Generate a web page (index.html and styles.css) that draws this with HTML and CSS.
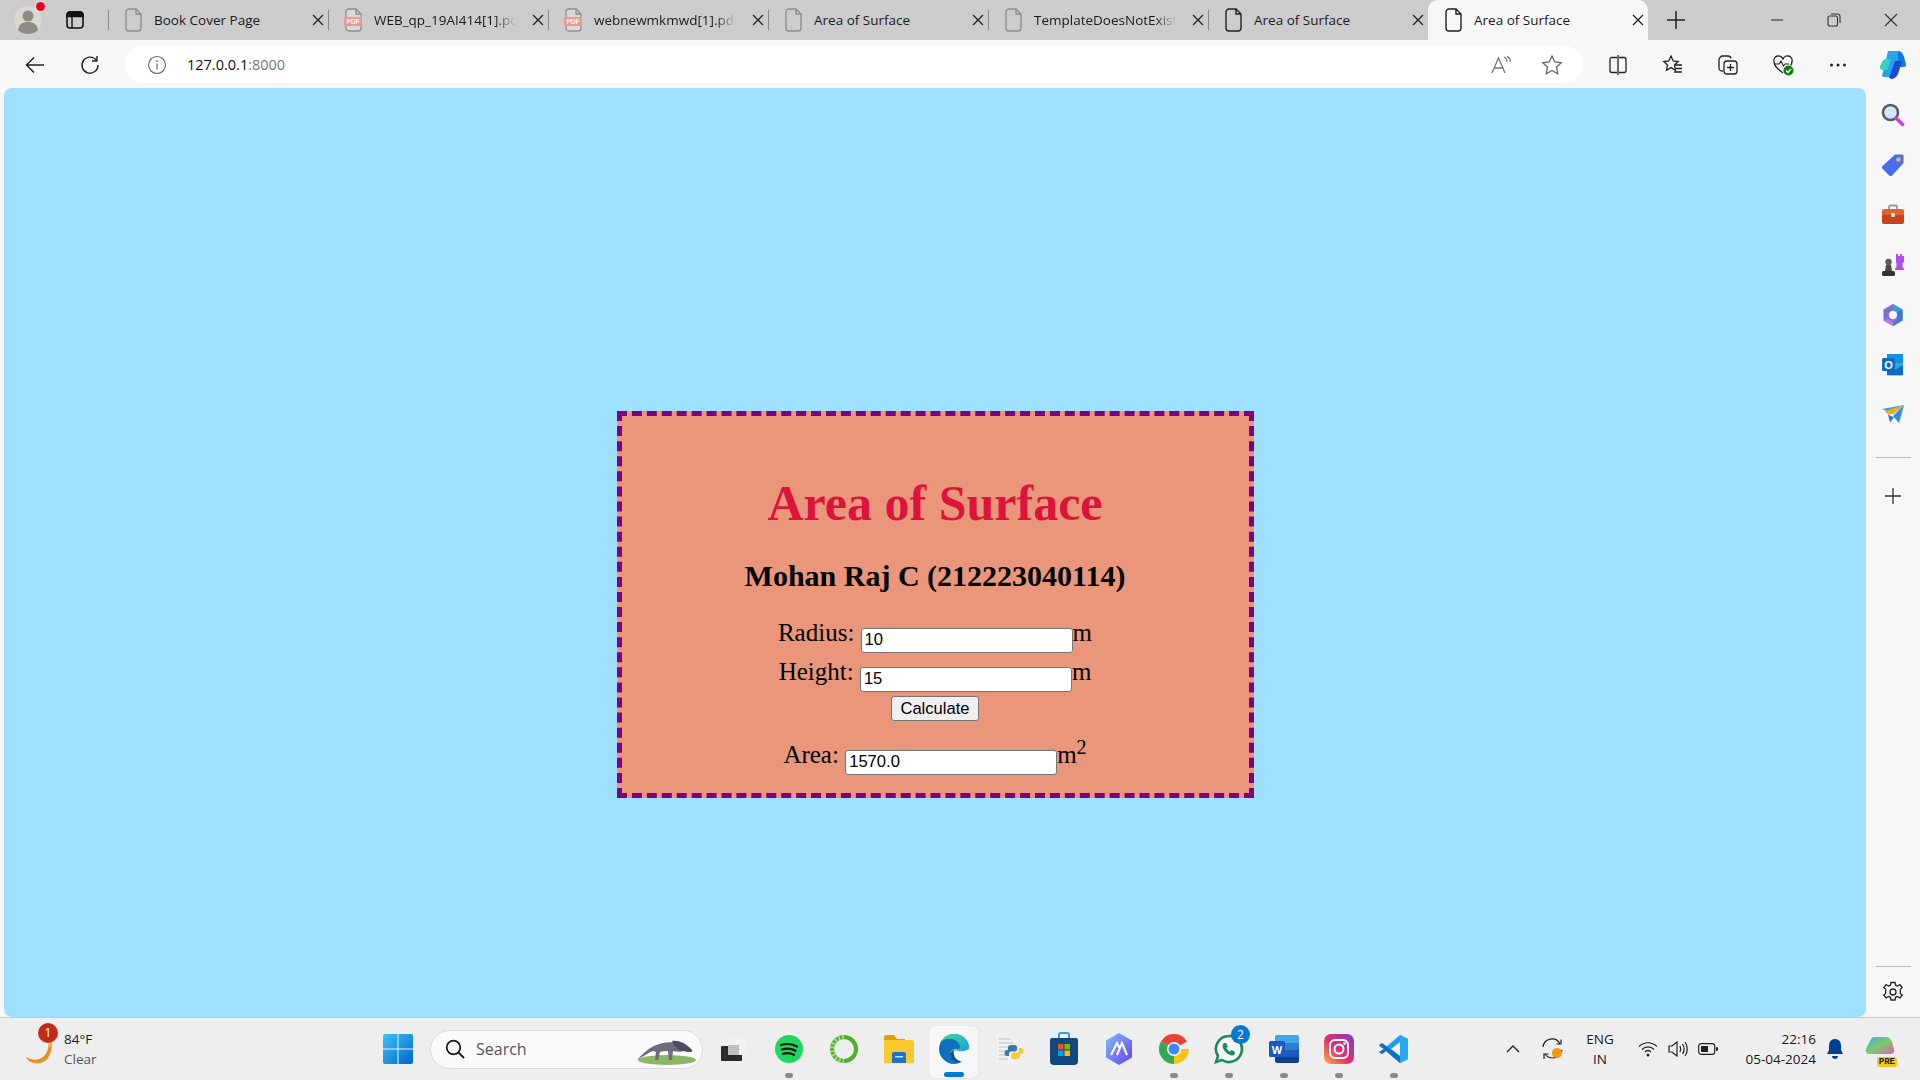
FILE: index.html
```html
<!DOCTYPE html>
<html lang="en">
<head>
  <meta charset="UTF-8" />
  <title>Area of Surface</title>
  <link rel="stylesheet" href="styles.css">
</head>
<body>
  <svg class="defs" width="0" height="0">
    <symbol id="file" viewBox="0 0 18 24"><path d="M2 4a3 3 0 0 1 3-3h7l5 5v14a3 3 0 0 1-3 3H5a3 3 0 0 1-3-3z M12 1v5h5" fill="none" stroke="currentColor" stroke-width="1.4"/></symbol>
    <symbol id="pdf" viewBox="0 0 18 24"><path d="M2 4a3 3 0 0 1 3-3h7l5 5v14a3 3 0 0 1-3 3H5a3 3 0 0 1-3-3z M12 1v5h5" fill="#fff" fill-opacity=".25" stroke="#8f8f8f" stroke-width="1.3"/><rect x="0" y="9" width="18" height="9" rx="1" fill="#e59a97"/><text x="9" y="16.2" text-anchor="middle" class="pdf-label">PDF</text></symbol>
    <symbol id="close" viewBox="0 0 12 12"><path d="M1 1l10 10M11 1L1 11" stroke="#222" stroke-width="1.3" fill="none"/></symbol>
  </svg>

  <div class="tabstrip">
    <div class="profile">
      <svg width="30" height="30" viewBox="0 0 30 30"><circle cx="15" cy="15" r="14" fill="#d9d7d2"/><circle cx="15" cy="11" r="5.5" fill="#8f8b85"/><path d="M5 25c1-6 5-8 10-8s9 2 10 8c-3 3-7 4-10 4s-7-1-10-4z" fill="#8f8b85"/></svg>
      <span class="profile-dot"></span>
    </div>
    <div class="tabs-btn">
      <svg width="18" height="18" viewBox="0 0 18 18"><rect x="1" y="1" width="16" height="16" rx="3" fill="none" stroke="#111" stroke-width="1.6"/><path d="M1 5.5V4a3 3 0 0 1 3-3h10a3 3 0 0 1 3 3v1.500zM6 5v12" fill="#111" stroke="#111" stroke-width="1.4"/></svg>
    </div>
    <div class="tab"><svg class="tab-icon"><use href="#file"/></svg><span class="tab-title">Book Cover Page</span><svg class="tab-x"><use href="#close"/></svg></div>
    <div class="tab"><svg class="tab-icon"><use href="#pdf"/></svg><span class="tab-title fade">WEB_qp_19AI414[1].pdf</span><svg class="tab-x"><use href="#close"/></svg></div>
    <div class="tab"><svg class="tab-icon"><use href="#pdf"/></svg><span class="tab-title fade">webnewmkmwd[1].pdf</span><svg class="tab-x"><use href="#close"/></svg></div>
    <div class="tab"><svg class="tab-icon"><use href="#file"/></svg><span class="tab-title">Area of Surface</span><svg class="tab-x"><use href="#close"/></svg></div>
    <div class="tab"><svg class="tab-icon"><use href="#file"/></svg><span class="tab-title fade">TemplateDoesNotExist</span><svg class="tab-x"><use href="#close"/></svg></div>
    <div class="tab"><svg class="tab-icon dark"><use href="#file"/></svg><span class="tab-title">Area of Surface</span><svg class="tab-x"><use href="#close"/></svg></div>
    <div class="tab active"><svg class="tab-icon dark"><use href="#file"/></svg><span class="tab-title">Area of Surface</span><svg class="tab-x"><use href="#close"/></svg></div>
    <div class="new-tab">
      <svg width="18" height="18" viewBox="0 0 18 18"><path d="M9 0v18M0 9h18" stroke="#222" stroke-width="1.5"/></svg>
    </div>
    <div class="win-controls">
      <svg width="14" height="14" viewBox="0 0 14 14"><path d="M1 7h12" stroke="#333" stroke-width="1.1"/></svg>
      <svg width="14" height="14" viewBox="0 0 14 14"><rect x="1" y="3" width="9.500" height="10" rx="2" fill="none" stroke="#333" stroke-width="1.100"/><path d="M4 1h6.500a2.500 2.500 0 0 1 2.500 2.500V10" fill="none" stroke="#333" stroke-width="1.100"/></svg>
      <svg width="14" height="14" viewBox="0 0 14 14"><path d="M1 1l12 12M13 1L1 13" stroke="#333" stroke-width="1.100"/></svg>
    </div>
  </div>

  <div class="toolbar">
    <div class="tool-btn first">
      <svg width="20" height="18" viewBox="0 0 20 18"><path d="M19 9H2M9 1.500L1.500 9 9 16.500" fill="none" stroke="#222" stroke-width="1.500"/></svg>
    </div>
    <div class="tool-btn">
      <svg width="20" height="20" viewBox="0 0 20 20"><path d="M16.500 5.500A8 8 0 1 0 18 10" fill="none" stroke="#222" stroke-width="1.400"/><path d="M17 1v5h-5" fill="none" stroke="#222" stroke-width="1.400"/></svg>
    </div>
    <div class="address">
      <svg class="info" width="20" height="20" viewBox="0 0 20 20"><circle cx="10" cy="10" r="8.500" fill="none" stroke="#666" stroke-width="1.100"/><path d="M10 8.500v6" stroke="#666" stroke-width="1.200"/><circle cx="10" cy="6" r=".9" fill="#666"/></svg>
      <span class="url">127.0.0.1<span class="url-port">:8000</span></span>
      <svg class="addr-icon" width="22" height="20" viewBox="0 0 22 20"><path d="M1 18L7.500 3 14 18M3.500 13h8" fill="none" stroke="#777" stroke-width="1.300"/><path d="M13 2c2 1 3 3 3 5M16 1c2 1.500 3.500 3.500 3.500 6" fill="none" stroke="#777" stroke-width="1.200"/></svg>
      <svg class="addr-icon star" width="22" height="22" viewBox="0 0 22 22"><path d="M11 2l2.800 6 6.400.8-4.700 4.400 1.200 6.500L11 16.500l-5.700 3.200 1.200-6.500L1.800 8.800 8.200 8z" fill="none" stroke="#666" stroke-width="1.300"/></svg>
    </div>
    <div class="tool-set">
      <div class="tool-btn"><svg width="20" height="20" viewBox="0 0 20 20"><path d="M9 2.500H4a2 2 0 0 0-2 2v11a2 2 0 0 0 2 2h5M11 2.500h5a2 2 0 0 1 2 2v11a2 2 0 0 1-2 2h-5M10 0v20" fill="none" stroke="#222" stroke-width="1.300"/></svg></div>
      <div class="tool-btn"><svg width="22" height="22" viewBox="0 0 22 22"><path d="M9 2l2.200 5 5 .6-3.700 3.400 1 5.200L9 13.600l-4.500 2.600 1-5.200L1.800 7.600l5-.6z" fill="none" stroke="#222" stroke-width="1.300"/><path d="M13 11h7M14 14.500h6M12 18h8" stroke="#222" stroke-width="1.300"/></svg></div>
      <div class="tool-btn"><svg width="22" height="22" viewBox="0 0 22 22"><path d="M6 17H5a3 3 0 0 1-3-3V6a4 4 0 0 1 4-4h5a3 3 0 0 1 3 2.500" fill="none" stroke="#222" stroke-width="1.300"/><rect x="7" y="7" width="13" height="13" rx="3" fill="none" stroke="#222" stroke-width="1.300"/><path d="M13.500 10v7M10 13.500h7" stroke="#222" stroke-width="1.300"/></svg></div>
      <div class="tool-btn"><svg width="22" height="22" viewBox="0 0 22 22"><path d="M11 19C6 15 2 12 2 7.500A4.500 4.500 0 0 1 11 5.500 4.500 4.500 0 0 1 20 7.500c0 1.500-.5 2.800-1.300 4" fill="none" stroke="#222" stroke-width="1.300"/><path d="M3 10h4l2-3 2.500 5 1.500-2h4" fill="none" stroke="#222" stroke-width="1.100"/><circle cx="16.500" cy="16.500" r="5" fill="#107c10"/><path d="M14 16.500l2 2 3-3.500" fill="none" stroke="#fff" stroke-width="1.300"/></svg></div>
      <div class="tool-btn"><svg width="18" height="4" viewBox="0 0 18 4"><circle cx="2.500" cy="2" r="1.500" fill="#222"/><circle cx="9" cy="2" r="1.500" fill="#222"/><circle cx="15.500" cy="2" r="1.500" fill="#222"/></svg></div>
      <div class="tool-btn copilot">
        <svg width="28" height="32" viewBox="0 0 28 32"><path d="M9 2h10c1.500 0 2.500 1 3 2.500l-7 20c-.6 1.800-2 3.500-4 3.500H5c-2 0-2-1.500-1.500-3z" fill="#2aa4e8"/><path d="M3 13c.5-1.500 2-3 4-3h5l-4 11H4c-2 0-3.500-1.500-3-3.500z" fill="#36d1c4"/><path d="M19 2c3 0 5 2 6 6l2 7c.5 2-1 3-2.500 3H19z" fill="#1676e3"/><path d="M10 29l6-17h7l-3 10c-1 4-3.500 8-7.500 8z" fill="#1b49d1"/></svg>
      </div>
    </div>
  </div>

  <div class="main">
    <div class="content">
      <div class="card">
        <h1>Area of Surface</h1>
        <h2>Mohan Raj C (212223040114)</h2>
        <form class="calc">
          <div class="field">Radius: <input type="text" value="10">m</div>
          <div class="field">Height: <input type="text" value="15">m</div>
          <div class="field-btn"><button type="button">Calculate</button></div>
          <div class="field">Area: <input type="text" value="1570.0">m<sup>2</sup></div>
        </form>
      </div>
    </div>

    <div class="sidebar">
      <div class="side-btn"><svg width="24" height="24" viewBox="0 0 24 24"><circle cx="9.500" cy="9.500" r="7.500" fill="#cfe7f7" stroke="#5c5c5c" stroke-width="2.600"/><path d="M15 15l6.500 6.500" stroke="#c63fd8" stroke-width="3.400" stroke-linecap="round"/></svg></div>
      <div class="side-btn"><svg width="24" height="24" viewBox="0 0 24 24"><path d="M14 1.500h7a1.500 1.500 0 0 1 1.500 1.500v7L11 22.500a2 2 0 0 1-2.800 0l-6.700-6.700a2 2 0 0 1 0-2.800z" fill="#4a6cf0"/><circle cx="17.500" cy="6.500" r="2.200" fill="#f2c230"/></svg></div>
      <div class="side-btn"><svg width="24" height="24" viewBox="0 0 24 24"><path d="M8 7V4a1.500 1.500 0 0 1 1.500-1.500h5A1.500 1.500 0 0 1 16 4v3" fill="none" stroke="#9a9a9a" stroke-width="1.800"/><path d="M1 8a2 2 0 0 1 2-2h18a2 2 0 0 1 2 2v4H1z" fill="#e2622c"/><path d="M1 12h22v7a2 2 0 0 1-2 2H3a2 2 0 0 1-2-2z" fill="#c9431a"/><rect x="10" y="10" width="4" height="4" rx="1" fill="#d8d8d8"/></svg></div>
      <div class="side-btn"><svg width="24" height="24" viewBox="0 0 24 24"><path d="M15 1h2v2h2V1h2v2h2v6l-1.500 1v4l1.500 2v1h-9v-1l1.500-2v-4L15 9z" fill="#b44df0"/><circle cx="7.500" cy="9" r="3.200" fill="#5a5a5a"/><path d="M5 12h5l1 6H4z" fill="#4a4a4a"/><rect x="1" y="18" width="13" height="5" rx="1.500" fill="#333"/></svg></div>
      <div class="side-btn"><svg width="24" height="24" viewBox="0 0 24 24"><path d="M12 1l9.500 5.500v11L12 23 2.500 17.500v-11z" fill="#7d6fd6"/><path d="M12 1l9.500 5.500-5 3L12 7z" fill="#2fa6d9"/><path d="M21.500 6.500v11L12 23l4.500-7.500V9.500z" fill="#3b7bd8"/><path d="M2.500 17.500L12 23v-4l-5-3z" fill="#c27ad8"/><circle cx="12" cy="12" r="4.200" fill="#f7f7f7"/></svg></div>
      <div class="side-btn"><svg width="24" height="24" viewBox="0 0 24 24"><rect x="6" y="1" width="16" height="9" fill="#1490df"/><path d="M6 10h16v11a1.500 1.500 0 0 1-1.500 1.500H7.500A1.500 1.500 0 0 1 6 21z" fill="#28a8ea"/><path d="M6 12l8 5 8-5v10H6z" fill="#0a6cc0"/><rect x="1" y="5" width="13" height="13" rx="1.500" fill="#0f6cbd"/><text x="7.500" y="15.500" text-anchor="middle" class="outlook-o">O</text></svg></div>
      <div class="side-btn"><svg width="24" height="24" viewBox="0 0 24 24"><path d="M1 6l22-4-11 9z" fill="#32a0e8"/><path d="M23 2L12 11l-5 .5L4 8z" fill="#f4a81c"/><path d="M7 11.500l2 8 4-5z" fill="#2a78d8"/><path d="M23 2l-5 18-6-7z" fill="#2f8ee8"/></svg></div>
      <div class="side-sep"></div>
      <div class="side-btn"><svg width="16" height="16" viewBox="0 0 16 16"><path d="M8 0v16M0 8h16" stroke="#333" stroke-width="1.300"/></svg></div>
      <div class="side-bottom">
        <div class="side-sep"></div>
        <div class="side-btn"><svg width="22" height="22" viewBox="0 0 22 22"><path d="M9 1.500h4l.6 2.700 1.900.8 2.400-1.500 2.300 3-2 1.900.2 2-.2 1.700 2 1.900-2.300 3-2.400-1.500-1.900.8-.6 2.700H9l-.6-2.700-1.900-.8-2.400 1.500-2.300-3 2-1.900-.2-1.700.2-2-2-1.900 2.300-3 2.400 1.500 1.900-.8z" fill="none" stroke="#222" stroke-width="1.300"/><circle cx="11" cy="11" r="3" fill="none" stroke="#222" stroke-width="1.300"/></svg></div>
      </div>
    </div>
  </div>

  <div class="taskbar">
    <div class="weather">
      <div class="moon">
        <svg width="32" height="32" viewBox="0 0 32 32"><path d="M26 3c2 9-1 19-10 23-5 2-10 1-14-2 4 6 12 8 17 5 8-4 11-16 7-26z" fill="#f08a1c"/><path d="M26 5c1 10-3 18-10 21-5 2-10 1-14-2 3 6 9 7 15 5 7-3 11-13 9-24z" fill="#f4a02a"/><path d="M24 8c2 9-3 18-12 19-4 0-7-1-10-3 3 5 8 6 13 5 9-2 13-12 9-21z" fill="#ee8b1e"/></svg>
        <span class="weather-badge">1</span>
      </div>
      <div class="weather-text">
        <div class="temp">84°F</div>
        <div class="cond">Clear</div>
      </div>
    </div>
    <div class="app start">
      <svg width="30" height="30" viewBox="0 0 30 30"><defs><linearGradient id="wing" x1="0" y1="0" x2="1" y2="1"><stop offset="0" stop-color="#3cc4f8"/><stop offset="1" stop-color="#0067c8"/></linearGradient></defs><path d="M0 2a2 2 0 0 1 2-2h12.500v14.500H0zM15.500 0H28a2 2 0 0 1 2 2v12.500H15.500zM0 15.500h14.500V30H2a2 2 0 0 1-2-2zM15.500 15.500H30V28a2 2 0 0 1-2 2H15.500z" fill="url(#wing)"/></svg>
    </div>
    <div class="search">
      <svg width="20" height="20" viewBox="0 0 20 20"><circle cx="8.500" cy="8.500" r="6.800" fill="none" stroke="#1a1a1a" stroke-width="1.800"/><path d="M13.500 13.500L19 19" stroke="#1a1a1a" stroke-width="1.800"/></svg>
      <span class="search-text">Search</span>
      <svg class="anteater" width="60" height="34" viewBox="0 0 60 34"><ellipse cx="31" cy="28" rx="29" ry="5" fill="#8fb56a"/><path d="M1 28c5-6 11-11 17-14 8-4 18-5 27-2 5 2 9 5 11 8-3 0-6 0-8-1-3 1-7 1-11 0l-1 9h-3l-1-9c-3 0-6 0-8 1l-2 8h-3l1-8-3-1c-5 2-11 6-16 9z" fill="#6f6a7e"/><path d="M36 9c6-1 14 2 20 9 2 2-4 2-8 1-4 0-9-3-12-10z" fill="#4f4a5e"/></svg>
    </div>
    <div class="apps">
      <div class="app"><svg width="26" height="26" viewBox="0 0 26 26"><rect y="1" width="21" height="15" rx="1" fill="#2b2b2b" transform="translate(0 9)"/><rect x="7" y="2" width="18" height="17" rx="2" fill="#f2f2f2"/><rect x="7" y="9" width="11" height="10" fill="#c0c0c0"/></svg></div>
      <div class="app running"><svg width="28" height="28" viewBox="0 0 28 28"><circle cx="14" cy="14" r="14" fill="#1ed760"/><path d="M6 10c6-1.800 11-1.300 16 1.500M7 14.500c5-1.400 9.500-1 13.500 1.300M8 18.700c4-1 7.500-.7 11 1" fill="none" stroke="#111" stroke-width="2.200" stroke-linecap="round"/></svg></div>
      <div class="app"><svg width="30" height="30" viewBox="0 0 30 30"><circle cx="15" cy="15" r="12" fill="none" stroke="#4cb028" stroke-width="4"/><path d="M15 3A12 12 0 0 0 15 27" fill="none" stroke="#a5d890" stroke-width="4.500" stroke-dasharray="2 2"/></svg></div>
      <div class="app"><svg width="30" height="28" viewBox="0 0 30 28"><path d="M0 2a2 2 0 0 1 2-2h8l3 4h8v4H0z" fill="#dba10c"/><path d="M0 5h28a2 2 0 0 1 2 2v21H0z" fill="#fbc92d"/><path d="M8 19a2 2 0 0 1 2-2h10a2 2 0 0 1 2 2v9H8z" fill="#1e73c4"/><rect x="11" y="21" width="8" height="1.500" fill="#bfe0f5"/></svg></div>
      <div class="app selected"><svg width="30" height="30" viewBox="0 0 30 30"><defs><linearGradient id="edg" x1="0" y1="0" x2="1" y2="1"><stop offset="0" stop-color="#40d8a0"/><stop offset="1" stop-color="#1aa0d8"/></linearGradient></defs><path d="M15 0a15 15 0 0 0-15 15c0 8 7 15 15 15 3 0 6-1 8-2.500-7 2-12-2-12-7 0-3 2-5 5-5 5 0 14 0 14-3A15 15 0 0 0 15 0z" fill="#0c70bd"/><path d="M15 0C9 0 4 3 2 8c3-3 7-4 11-3 5 1 8 5 8 8 0 2-2 3-5 3 5 2 14 1 14-2C30 6 24 0 15 0z" fill="url(#edg)"/><path d="M11 21c0 5 5 9 12 6.500-3-.5-7-2-8-7-1-3 0-4 1-4.500-3 0-5 2-5 5z" fill="#0a4f9e"/></svg></div>
      <div class="app"><svg width="30" height="32" viewBox="0 0 30 32"><path d="M2 0h14l6 6v25H2z" fill="#f0f0f0"/><path d="M5 6h12M5 10h14M5 14h12M5 18h9M5 22h10M5 26h9" stroke="#d0d0d0" stroke-width="1.500"/><path d="M19 11h-3c-2 0-3 1-3 3v2h6v1h-8c-2 0-3 1-3 3.500" fill="none"/><path d="M18 12c-3 0-4 1-4 2.500V17h-1c-1.500 0-2.500 1-2.500 3s1 3 2.500 3h2v-2.500c0-1 1-2 2-2h4c1 0 2-1 2-2V14c0-1-1-2-2-2z" fill="#3a77a8"/><path d="M22 26c3 0 4-1 4-2.500V21h1c1.500 0 2.500-1 2.500-3s-1-3-2.500-3h-2v2.500c0 1-1 2-2 2h-4c-1 0-2 1-2 2V24c0 1 1 2 2 2z" fill="#f4ca3d"/></svg></div>
      <div class="app"><svg width="30" height="34" viewBox="0 0 30 34"><path d="M10 7V3a2 2 0 0 1 2-2h6a2 2 0 0 1 2 2v4" fill="none" stroke="#28a8ea" stroke-width="2"/><path d="M1 8a2 2 0 0 1 2-2h24a2 2 0 0 1 2 2v21a4 4 0 0 1-4 4H5a4 4 0 0 1-4-4z" fill="#12477f"/><rect x="9" y="12" width="5.500" height="5.500" fill="#f25022"/><rect x="15.500" y="12" width="5.500" height="5.500" fill="#7fba00"/><rect x="9" y="18.500" width="5.500" height="5.500" fill="#00a4ef"/><rect x="15.500" y="18.500" width="5.500" height="5.500" fill="#ffb900"/></svg></div>
      <div class="app"><svg width="30" height="32" viewBox="0 0 30 32"><defs><linearGradient id="pri" x1="0" y1="0" x2="1" y2="1"><stop offset="0" stop-color="#7cc0f0"/><stop offset="1" stop-color="#6a3ff0"/></linearGradient></defs><path d="M15 0l13 7.500v17L15 32 2 24.500v-17z" fill="url(#pri)"/><path d="M7 22l6-12 3 6M13 22l5-12 5 12" fill="none" stroke="#fff" stroke-width="2"/></svg></div>
      <div class="app running"><svg width="30" height="30" viewBox="0 0 30 30"><path d="M15 15L28 7.500A15 15 0 0 0 2 7.500z" fill="#ea4335"/><path d="M15 15h15a15 15 0 0 1-15 15l-.5 0z" fill="#fbc116"/><path d="M15 15v15A15 15 0 0 1 2 7.500z" fill="#34a853"/><circle cx="15" cy="15" r="7" fill="#fff"/><circle cx="15" cy="15" r="5.500" fill="#4285f4"/></svg></div>
      <div class="app running">
        <svg width="30" height="30" viewBox="0 0 30 30"><path d="M15 2a13 13 0 0 0-11 20L2 28l6-2A13 13 0 1 0 15 2z" fill="#fff" fill-opacity=".4" stroke="#1d8a5b" stroke-width="2.600"/><path d="M10 9c-1 1-2 2-1 5 1 3 4 6 7 7 3 1 4 0 5-1.500l-.5-2-3-1.500-1.500 1.500c-1.500-.5-3-2.500-3.500-3.500l1.200-1.500-1.500-3.500z" fill="#1d8a5b"/></svg>
        <span class="app-badge">2</span>
      </div>
      <div class="app running"><svg width="30" height="30" viewBox="0 0 30 30"><path d="M8 1h20a2 2 0 0 1 2 2v6H6V3a2 2 0 0 1 2-2z" fill="#41a5ee"/><rect x="6" y="9" width="24" height="7" fill="#2b7cd3"/><rect x="6" y="16" width="24" height="7" fill="#185abd"/><path d="M6 23h24v4a2 2 0 0 1-2 2H8a2 2 0 0 1-2-2z" fill="#103f91"/><rect x="0" y="7" width="16" height="16" rx="1.500" fill="#185abd"/><text x="8" y="19.500" text-anchor="middle" class="word-w">W</text></svg></div>
      <div class="app running"><svg width="30" height="30" viewBox="0 0 30 30"><defs><linearGradient id="ig" x1="0" y1="1" x2="1" y2="0"><stop offset="0" stop-color="#fbb040"/><stop offset=".45" stop-color="#e1306c"/><stop offset="1" stop-color="#7a3cc8"/></linearGradient></defs><rect width="30" height="30" rx="7" fill="url(#ig)"/><rect x="6" y="6" width="18" height="18" rx="5" fill="none" stroke="#fff" stroke-width="2"/><circle cx="15" cy="15" r="4.500" fill="none" stroke="#fff" stroke-width="2"/><circle cx="20.500" cy="9.500" r="1.300" fill="#fff"/></svg></div>
      <div class="app running"><svg width="30" height="30" viewBox="0 0 30 30"><path d="M21 1l8 4v20l-8 4L7 17l-4 3-3-2 5-3-5-3 3-2 4 3z" fill="#1f9cf0"/><path d="M21 1l8 4v20l-8 4z" fill="#2aa7f2"/><path d="M21 8v14l-9-7z" fill="#f0f0f0"/><path d="M0 11l3-2 18 13v7L7 17l-4 3-3-2 5-3z" fill="#0e72c4"/></svg></div>
    </div>
    <div class="tray">
      <div class="tray-item chevron"><svg width="14" height="8" viewBox="0 0 14 8"><path d="M1 7l6-6 6 6" fill="none" stroke="#222" stroke-width="1.400"/></svg></div>
      <div class="tray-item sync"><svg width="22" height="22" viewBox="0 0 22 22"><path d="M1 9a9 9 0 0 1 17-3M20 12c-1 4-5 8-9 8-3 0-6-1-8-4" fill="none" stroke="#222" stroke-width="1.200"/><path d="M19 1.500V6h-4.500M2 21v-5h4.500" fill="none" stroke="#222" stroke-width="1.200"/><circle cx="15" cy="15" r="5" fill="#f59a0e"/></svg></div>
      <div class="lang"><div>ENG</div><div>IN</div></div>
      <div class="tray-item"><svg width="20" height="16" viewBox="0 0 20 16"><path d="M1 5.500c5-5 13-5 18 0M4 8.500c3.500-3.500 8.500-3.500 12 0M7 11c2-2 4-2 6 0" fill="none" stroke="#222" stroke-width="1.200"/><circle cx="10" cy="14" r="1.500" fill="#222"/></svg></div>
      <div class="tray-item"><svg width="20" height="18" viewBox="0 0 20 18"><path d="M1 6v6h3l5 4V2L4 6z" fill="none" stroke="#222" stroke-width="1.200"/><path d="M12 6c1 2 1 4 0 6M14.500 4c2 3 2 7 0 10M17 2c3 4 3 10 0 14" fill="none" stroke="#222" stroke-width="1.200"/></svg></div>
      <div class="tray-item"><svg width="20" height="12" viewBox="0 0 20 12"><rect x=".7" y=".7" width="16" height="10.600" rx="2.500" fill="none" stroke="#222" stroke-width="1.200"/><rect x="3" y="3" width="7" height="6" fill="#222"/><rect x="18" y="4" width="2" height="4" rx="1" fill="#222"/></svg></div>
      <div class="clock"><div>22:16</div><div>05-04-2024</div></div>
      <div class="tray-item bell"><svg width="18" height="20" viewBox="0 0 18 20"><path d="M9 0c4 0 6 3 6 7v4l2 4H1l2-4V7c0-4 2-7 6-7z" fill="#003e92"/><path d="M6 17h6c0 2-1.500 3-3 3s-3-1-3-3z" fill="#003e92"/></svg></div>
      <div class="tray-item pre">
        <svg width="30" height="26" viewBox="0 0 30 26"><defs><linearGradient id="cp" x1="0" y1="0" x2="1" y2="1"><stop offset="0" stop-color="#3fa9f0"/><stop offset=".5" stop-color="#7ccb6a"/><stop offset="1" stop-color="#e45bb8"/></linearGradient></defs><path d="M9 1h12c3 0 5 2 6 5l2 7c1 3-1 5-4 5H5c-3 0-5-2-4-5l4-8c1-2 2-4 4-4z" fill="url(#cp)"/></svg>
        <span class="pre-tag">PRE</span>
      </div>
    </div>
  </div>
</body>
</html>
```
FILE: styles.css
```css
* {
  box-sizing: border-box;
}

html, body {
  margin: 0;
  height: 100%;
}

body {
  width: 1920px;
  height: 1080px;
  overflow: hidden;
  display: flex;
  flex-direction: column;
  font-family: 'Open Sans', 'Noto Sans', sans-serif;
  color: #1a1a1a;
  background: #f7f7f7;
}

.defs {
  position: absolute;
}

.pdf-label {
  font: bold 6.5px 'Liberation Sans', sans-serif;
  fill: #fff;
}

.outlook-o {
  font: bold 11px 'Liberation Sans', sans-serif;
  fill: #fff;
}

.word-w {
  font: bold 11px 'Liberation Sans', sans-serif;
  fill: #fff;
}

/* tab strip */
.tabstrip {
  height: 40px;
  background: #cccccc;
  display: flex;
  align-items: center;
  flex-shrink: 0;
}

.profile {
  position: relative;
  width: 30px;
  height: 30px;
  margin-left: 13px;
}

.profile-dot {
  position: absolute;
  top: -3px;
  right: -2px;
  width: 9px;
  height: 9px;
  border-radius: 50%;
  background: #e5001e;
  box-shadow: 0 0 0 1px #eee;
}

.tabs-btn {
  width: 18px;
  height: 18px;
  margin-left: 23px;
  margin-right: 24px;
  display: flex;
}

.tab {
  width: 220px;
  height: 40px;
  display: flex;
  align-items: center;
  padding-left: 16px;
  position: relative;
  font-size: 13.500px;
}

.tab::before {
  content: "";
  position: absolute;
  left: 0;
  top: 10px;
  height: 30px;
  height: 20px;
  width: 1px;
  background: #8a8a8a;
}

.tab.active {
  background: #f7f7f7;
  border-radius: 10px 10px 0 0;
}

.tab.active::before {
  display: none;
}

.tab-icon {
  width: 18px;
  height: 24px;
  color: #8f8f8f;
  flex-shrink: 0;
}

.tab-icon.dark {
  color: #222;
}

.tab-title {
  width: 142px;
  margin-left: 12px;
  white-space: nowrap;
  overflow: hidden;
  flex-shrink: 0;
}

.tab-title.fade {
  -webkit-mask-image: linear-gradient(to right, #000 85%, transparent 100%);
  mask-image: linear-gradient(to right, #000 85%, transparent 100%);
}

.tab-x {
  width: 12px;
  height: 12px;
  margin-left: 16px;
  flex-shrink: 0;
}

.new-tab {
  width: 18px;
  height: 18px;
  margin-left: 19px;
  display: flex;
}

.win-controls {
  margin-left: auto;
  display: flex;
  gap: 43px;
  padding-right: 22px;
}

/* toolbar */
.toolbar {
  height: 48px;
  flex-shrink: 0;
  display: flex;
  align-items: center;
  padding-top: 1px;
}

.tool-btn {
  width: 55px;
  height: 36px;
  display: flex;
  align-items: center;
  justify-content: center;
  flex-shrink: 0;
}

.tool-btn.first {
  margin-left: 7px;
}

.address {
  width: 1460px;
  height: 37px;
  margin-left: 8px;
  background: #fff;
  border-radius: 19px;
  display: flex;
  align-items: center;
  padding-left: 22px;
}

.url {
  margin-left: 20px;
  font-size: 14.500px;
  color: #111;
}

.url-port {
  color: #777;
}

.addr-icon {
  margin-left: auto;
}

.addr-icon.star {
  margin-left: 28px;
  margin-right: 20px;
}

.tool-set {
  display: flex;
  align-items: center;
  margin-left: 7px;
}

.copilot {
  margin-left: 0;
}

/* page */
.main {
  flex: 1;
  min-height: 0;
  display: flex;
}

.content {
  width: 1862px;
  height: 929px;
  margin-left: 4px;
  background: #9fdfff;
  border-radius: 8px;
  padding-top: 323px;
}

.card {
  width: 637px;
  height: 387px;
  margin: 0 auto;
  border: 5px dashed purple;
  background: #e9967a;
  font-family: 'Liberation Serif', serif;
  color: #000;
  text-align: center;
}

.card h1 {
  margin: 58px 0 0;
  font-size: 50px;
  line-height: 58px;
  color: crimson;
}

.card h2 {
  margin: 26px 0 0;
  font-size: 30px;
  line-height: 36px;
}

.calc {
  margin-top: 24px;
}

.field {
  font-size: 25px;
  height: 39px;
  line-height: 29px;
}

.field input {
  width: 212px;
  height: 25px;
  padding: 1px 3px;
  border: 1px solid #767676;
  border-radius: 3px;
  background: #fff;
  font: 16.600px 'Liberation Sans', sans-serif;
  color: #000;
  vertical-align: -4px;
}

.field sup {
  font-size: 20px;
  line-height: 0;
}

.field-btn {
  height: 44px;
}

.field-btn button {
  width: 88px;
  height: 25px;
  padding: 0;
  border: 1px solid #767676;
  border-radius: 3px;
  background: #efefef;
  font: 16.600px 'Liberation Sans', sans-serif;
  color: #000;
}

/* edge sidebar */
.sidebar {
  flex: 1;
  display: flex;
  flex-direction: column;
  align-items: center;
  padding-top: 2px;
}

.side-btn {
  width: 40px;
  height: 50px;
  display: flex;
  align-items: center;
  justify-content: center;
  flex-shrink: 0;
}

.side-sep {
  width: 35px;
  height: 1px;
  background: #bbb;
  margin: 17px 0 13px;
}

.side-bottom {
  margin-top: auto;
  display: flex;
  flex-direction: column;
  align-items: center;
  padding-bottom: 0;
}

.side-bottom .side-sep {
  margin: 0;
}

/* taskbar */
.taskbar {
  height: 63px;
  margin-top: 0;
  flex-shrink: 0;
  background: #eeeeee;
  border-top: 1px solid #c8c8c8;
  display: flex;
  align-items: center;
}

.weather {
  width: 370px;
  padding-left: 24px;
  display: flex;
  align-items: center;
}

.moon {
  position: relative;
  width: 32px;
  height: 32px;
}

.weather-badge {
  position: absolute;
  left: 14px;
  top: -10px;
  width: 20px;
  height: 20px;
  border-radius: 50%;
  background: #c42b1c;
  color: #fff;
  font-size: 12px;
  line-height: 20px;
  text-align: center;
}

.weather-text {
  margin-left: 8px;
  font-size: 13.500px;
  line-height: 20px;
}

.cond {
  color: #555;
}

.app {
  position: relative;
  width: 55px;
  height: 60px;
  display: flex;
  align-items: center;
  justify-content: center;
  flex-shrink: 0;
}

.apps {
  display: flex;
  margin-left: 3px;
}

.app.running::after {
  content: "";
  position: absolute;
  bottom: 1px;
  left: 24px;
  width: 8px;
  height: 5px;
  border-radius: 3px;
  background: #8a8a8a;
}

.app.selected::before {
  content: "";
  position: absolute;
  left: 3px;
  top: 7px;
  width: 49px;
  height: 52px;
  border-radius: 5px;
  background: #f7f7f7;
  box-shadow: 0 0 1px rgba(0, 0, 0, 0.2);
}

.app.selected svg {
  position: relative;
}

.app.selected::after {
  content: "";
  position: absolute;
  bottom: 2px;
  left: 18px;
  width: 20px;
  height: 5px;
  border-radius: 3px;
  background: #0078d4;
}

.search {
  width: 273px;
  height: 39px;
  margin-left: 5px;
  background: #fafafa;
  border: 1px solid #dcdcdc;
  border-radius: 20px;
  display: flex;
  align-items: center;
  padding-left: 14px;
  flex-shrink: 0;
}

.search-text {
  margin-left: 11px;
  font-size: 16px;
  color: #555;
}

.anteater {
  margin-left: auto;
  margin-right: 6px;
}

.app-badge {
  position: absolute;
  top: 6px;
  right: 6px;
  width: 19px;
  height: 19px;
  border-radius: 50%;
  background: #0078d4;
  color: #fff;
  font-size: 12px;
  line-height: 19px;
  text-align: center;
}

.tray {
  margin-left: auto;
  display: flex;
  align-items: center;
  padding-right: 20px;
  font-size: 13.500px;
}

.tray-item {
  width: 30px;
  height: 40px;
  display: flex;
  align-items: center;
  justify-content: center;
  position: relative;
}

.chevron,
.sync {
  width: 40px;
}

.lang {
  width: 50px;
  margin: 0 8px 0 2px;
  text-align: center;
  line-height: 20px;
}

.clock {
  width: 93px;
  text-align: right;
  line-height: 20px;
}

.bell {
  margin-left: 4px;
}

.pre {
  width: 40px;
  margin-left: 10px;
}

.pre-tag {
  position: absolute;
  right: 3px;
  bottom: 2px;
  background: #f5c518;
  border-radius: 3px;
  font: bold 9px/10px 'Liberation Mono', monospace;
  color: #222;
  padding: 0 2px;
}
```
